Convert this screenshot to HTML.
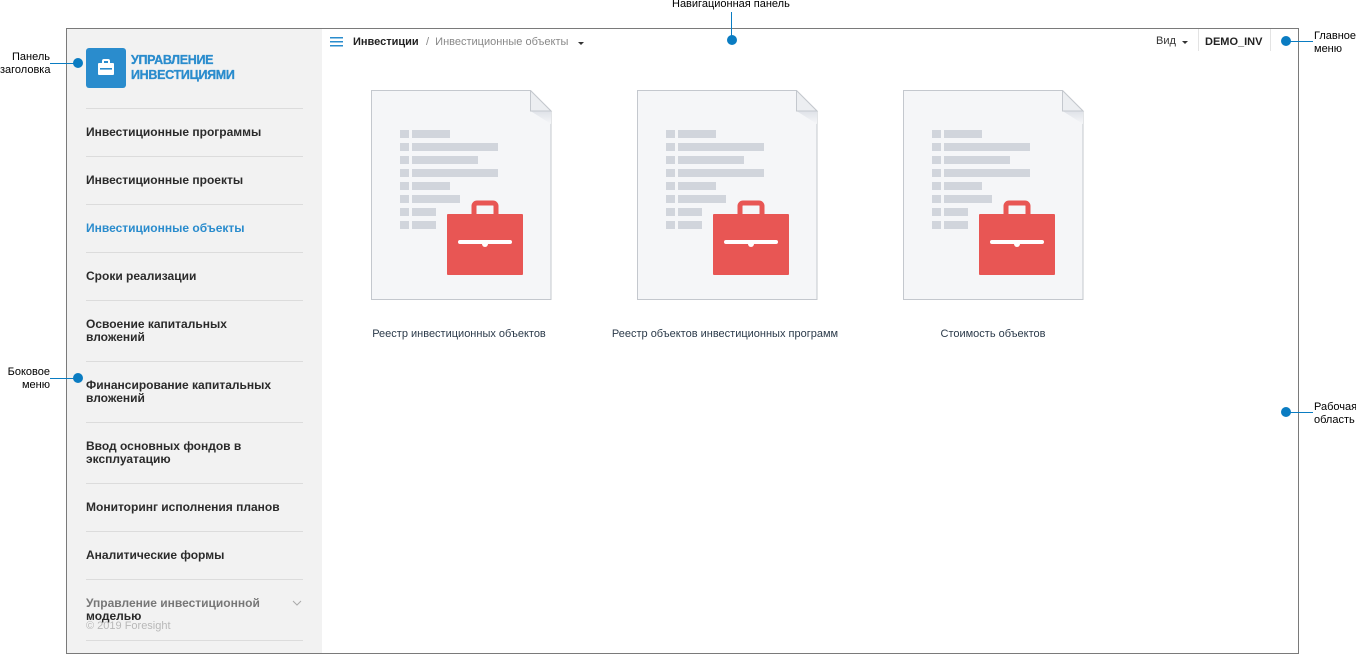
<!DOCTYPE html>
<html><head><meta charset="utf-8"><style>
*{margin:0;padding:0;box-sizing:border-box}
body{width:1356px;height:653px;background:#fff;font-family:"Liberation Sans",Arial,sans-serif;position:relative;overflow:hidden;color:#222}
.a{position:absolute}
.frame{left:66px;top:28px;width:1233px;height:626px;border:1px solid #7a7a7a}
.side{left:67px;top:29px;width:255px;height:624px;background:#f2f2f2}
.sep{position:absolute;left:86px;width:217px;height:1px;background:#dcdcdc}
.mi{position:absolute;left:86px;font-size:12px;font-weight:bold;color:#2b2b2b;line-height:13px;width:200px}
.lbl{font-size:11px;color:#000;line-height:13px}
.dot{position:absolute;width:10px;height:10px;border-radius:50%;background:#0a7cc2}
.ln{position:absolute;background:#0a7cc2}
.cap{position:absolute;top:328px;font-size:11px;color:#2b3a4a;width:260px;text-align:center}
</style></head><body>
<div class="a frame"></div>
<div class="a side"></div>
<div class="a" style="left:86px;top:48px;width:40px;height:40px;background:#2a8ccd;border-radius:3px"></div>
<svg class="a" style="left:96px;top:58px" width="20" height="20" viewBox="0 0 20 20"><rect x="7" y="2" width="6" height="4" rx="1" fill="none" stroke="#fff" stroke-width="2"/><rect x="2" y="5" width="16" height="12" rx="1" fill="#fff"/><rect x="4" y="10" width="12" height="1.6" fill="#2a8ccd"/></svg>
<div class="a" style="left:131px;top:53px;font-size:12.5px;font-weight:bold;color:#2a8ccd;line-height:15px;letter-spacing:-0.3px;-webkit-text-stroke:0.3px #2a8ccd">УПРАВЛЕНИЕ<br>ИНВЕСТИЦИЯМИ</div>
<div class="sep" style="top:108px"></div>
<div class="mi" style="top:126px">Инвестиционные программы</div>
<div class="sep" style="top:156px"></div>
<div class="mi" style="top:174px">Инвестиционные проекты</div>
<div class="sep" style="top:204px"></div>
<div class="mi" style="top:222px;color:#2a8ccd">Инвестиционные объекты</div>
<div class="sep" style="top:252px"></div>
<div class="mi" style="top:270px">Сроки реализации</div>
<div class="sep" style="top:300px"></div>
<div class="mi" style="top:318px">Освоение капитальных<br>вложений</div>
<div class="sep" style="top:361px"></div>
<div class="mi" style="top:379px">Финансирование капитальных<br>вложений</div>
<div class="sep" style="top:422px"></div>
<div class="mi" style="top:440px">Ввод основных фондов в<br>эксплуатацию</div>
<div class="sep" style="top:483px"></div>
<div class="mi" style="top:501px">Мониторинг исполнения планов</div>
<div class="sep" style="top:531px"></div>
<div class="mi" style="top:549px">Аналитические формы</div>
<div class="sep" style="top:579px"></div>
<div class="mi" style="top:597px;color:#777">Управление инвестиционной<br><span style="color:#2b2b2b">моделью</span></div>
<svg class="a" style="left:292px;top:600px" width="10" height="6" viewBox="0 0 10 6"><path d="M1 1L5 5L9 1" fill="none" stroke="#aaa" stroke-width="1"/></svg>
<div class="a" style="left:86px;top:620px;font-size:11px;color:#b8b8b8">© 2019 Foresight</div>
<div class="sep" style="top:640px"></div>
<svg class="a" style="left:330px;top:37px" width="13" height="10"><rect y="0" width="13" height="1.5" fill="#2a8ccd"/><rect y="4" width="13" height="1.5" fill="#2a8ccd"/><rect y="8" width="13" height="1.5" fill="#2a8ccd"/></svg>
<div class="a" style="left:353px;top:36px;font-size:11px;font-weight:bold;color:#222">Инвестиции</div>
<div class="a" style="left:426px;top:36px;font-size:11px;color:#888">/&nbsp; Инвестиционные объекты</div>
<div class="a" style="left:578px;top:42px;width:0;height:0;border-left:3px solid transparent;border-right:3px solid transparent;border-top:3px solid #333"></div>
<div class="a" style="left:1156px;top:35px;font-size:11px;color:#333">Вид</div>
<div class="a" style="left:1182px;top:41px;width:0;height:0;border-left:3px solid transparent;border-right:3px solid transparent;border-top:3px solid #333"></div>
<div class="a" style="left:1198px;top:29px;width:1px;height:22px;background:#e3e3e3"></div>
<div class="a" style="left:1205px;top:36px;font-size:11px;font-weight:bold;color:#222">DEMO_INV</div>
<div class="a" style="left:1270px;top:29px;width:1px;height:22px;background:#e3e3e3"></div>
<svg width="0" height="0" style="position:absolute"><defs>
<linearGradient id="fg" x1="0" y1="0" x2="0" y2="1"><stop offset="0" stop-color="#dfe2e8"/><stop offset="1" stop-color="#f5f6f8"/></linearGradient>
<g id="doc">
<path d="M0.5 0.5H159.5L180 21V209.5H0.5Z" fill="#f5f6f8" stroke="#c4c8ce"/>
<path d="M159.5 21H180V34Z" fill="url(#fg)"/>
<path d="M159.5 0.5V21H180Z" fill="#eceef1" stroke="#c4c8ce"/>
<g fill="#d1d5dc">
<rect x="29" y="40" width="9" height="8"/><rect x="41" y="40" width="38" height="8"/>
<rect x="29" y="53" width="9" height="8"/><rect x="41" y="53" width="86" height="8"/>
<rect x="29" y="66" width="9" height="8"/><rect x="41" y="66" width="66" height="8"/>
<rect x="29" y="79" width="9" height="8"/><rect x="41" y="79" width="86" height="8"/>
<rect x="29" y="92" width="9" height="8"/><rect x="41" y="92" width="38" height="8"/>
<rect x="29" y="105" width="9" height="8"/><rect x="41" y="105" width="48" height="8"/>
<rect x="29" y="118" width="9" height="8"/><rect x="41" y="118" width="24" height="8"/>
<rect x="29" y="131" width="9" height="8"/><rect x="41" y="131" width="24" height="8"/>
</g>
<rect x="103" y="113" width="22" height="16" rx="3" fill="none" stroke="#e85654" stroke-width="5"/>
<rect x="76" y="124" width="76" height="61" rx="1" fill="#e85654"/>
<rect x="87" y="150" width="54" height="4" rx="2" fill="#fff"/><circle cx="114" cy="154" r="3" fill="#fff"/>
</g></defs></svg>
<svg class="a" style="left:371px;top:90px" width="182" height="212"><use href="#doc"/></svg>
<svg class="a" style="left:637px;top:90px" width="182" height="212"><use href="#doc"/></svg>
<svg class="a" style="left:903px;top:90px" width="182" height="212"><use href="#doc"/></svg>
<div class="cap" style="left:329px">Реестр инвестиционных объектов</div>
<div class="cap" style="left:595px">Реестр объектов инвестиционных программ</div>
<div class="cap" style="left:863px">Стоимость объектов</div>
<div class="a lbl" style="left:672px;top:-2px">Навигационная панель</div>
<div class="ln" style="left:731px;top:12px;width:1px;height:28px"></div>
<div class="dot" style="left:727px;top:35px"></div>
<div class="a lbl" style="left:0;top:51px;width:50px;text-align:right">Панель<br>заголовка</div>
<div class="ln" style="left:50px;top:63px;width:28px;height:1px"></div>
<div class="dot" style="left:73px;top:58px"></div>
<div class="a lbl" style="left:1314px;top:30px">Главное<br>меню</div>
<div class="ln" style="left:1286px;top:41px;width:27px;height:1px"></div>
<div class="dot" style="left:1281px;top:36px"></div>
<div class="a lbl" style="left:0;top:366px;width:50px;text-align:right">Боковое<br>меню</div>
<div class="ln" style="left:50px;top:378px;width:28px;height:1px"></div>
<div class="dot" style="left:73px;top:373px"></div>
<div class="a lbl" style="left:1314px;top:401px">Рабочая<br>область</div>
<div class="ln" style="left:1286px;top:412px;width:27px;height:1px"></div>
<div class="dot" style="left:1281px;top:407px"></div>
</body></html>
